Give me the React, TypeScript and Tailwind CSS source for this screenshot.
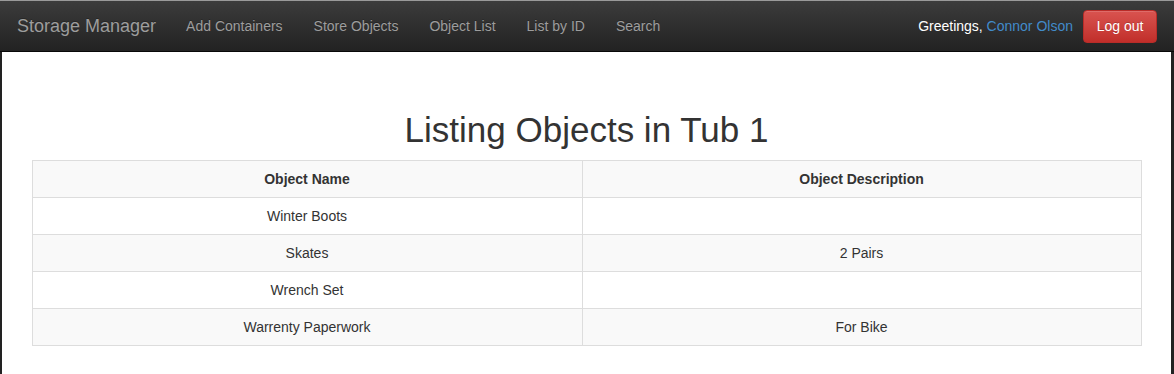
const rows = [
  { name: "Winter Boots", desc: "" },
  { name: "Skates", desc: "2 Pairs" },
  { name: "Wrench Set", desc: "" },
  { name: "Warrenty Paperwork", desc: "For Bike" },
];

const links = ["Add Containers", "Store Objects", "Object List", "List by ID", "Search"];

export default function App() {
  return (
    <div className="w-[1174px] h-[374px] overflow-hidden bg-[#222] font-['Liberation_Sans',Arial,sans-serif] text-[14px] text-[#333]">
      {/* Navbar */}
      <nav className="h-[52px] border-t border-t-[#9a9a9a] border-b border-b-[#080808] bg-gradient-to-b from-[#3c3c3c] to-[#222] flex items-center justify-between">
        <div className="flex items-center">
          <a className="pl-[17px] pr-[15px] text-[18px] text-[#9d9d9d] [text-shadow:0_-1px_0_rgba(0,0,0,0.25)]">
            Storage Manager
          </a>
          {links.map((l) => (
            <a key={l} className="px-[15px] mr-[1px] text-[#9d9d9d] [text-shadow:0_-1px_0_rgba(0,0,0,0.25)]">
              {l}
            </a>
          ))}
        </div>
        <div className="flex items-center pr-[17px]">
          <span className="text-white">
            Greetings, <a className="text-[#428bca]">Connor Olson</a>
          </span>
          <button className="ml-[10px] h-[33px] w-[74px] rounded-[4px] border border-[#b92c28] bg-gradient-to-b from-[#d9534f] to-[#c12e2a] text-white text-[14px] [text-shadow:0_-1px_0_rgba(0,0,0,0.2)] shadow-[inset_0_1px_0_rgba(255,255,255,0.15)]">
            Log out
          </button>
        </div>
      </nav>

      {/* Body */}
      <div className="ml-[2px] mr-[3px] h-[322px] bg-white pt-[58px]">
        <div className="w-[1110px] mx-auto">
          <h1 className="text-[35px] leading-[40px] text-center text-[#333] mb-[10px]">
            Listing Objects in Tub 1
          </h1>
          <table className="w-full border-collapse border border-[#ddd] table-fixed">
            <thead>
              <tr className="bg-[#f9f9f9]">
                <th className="w-[550px] border border-[#ddd] h-[37px] p-0 font-bold text-center">Object Name</th>
                <th className="border border-[#ddd] h-[37px] p-0 font-bold text-center">Object Description</th>
              </tr>
            </thead>
            <tbody>
              {rows.map((r, i) => (
                <tr key={r.name} className={i % 2 === 1 ? "bg-[#f9f9f9]" : "bg-white"}>
                  <td className="border border-[#ddd] h-[37px] p-0 text-center">{r.name}</td>
                  <td className="border border-[#ddd] h-[37px] p-0 text-center">{r.desc}</td>
                </tr>
              ))}
            </tbody>
          </table>
        </div>
      </div>
    </div>
  );
}
